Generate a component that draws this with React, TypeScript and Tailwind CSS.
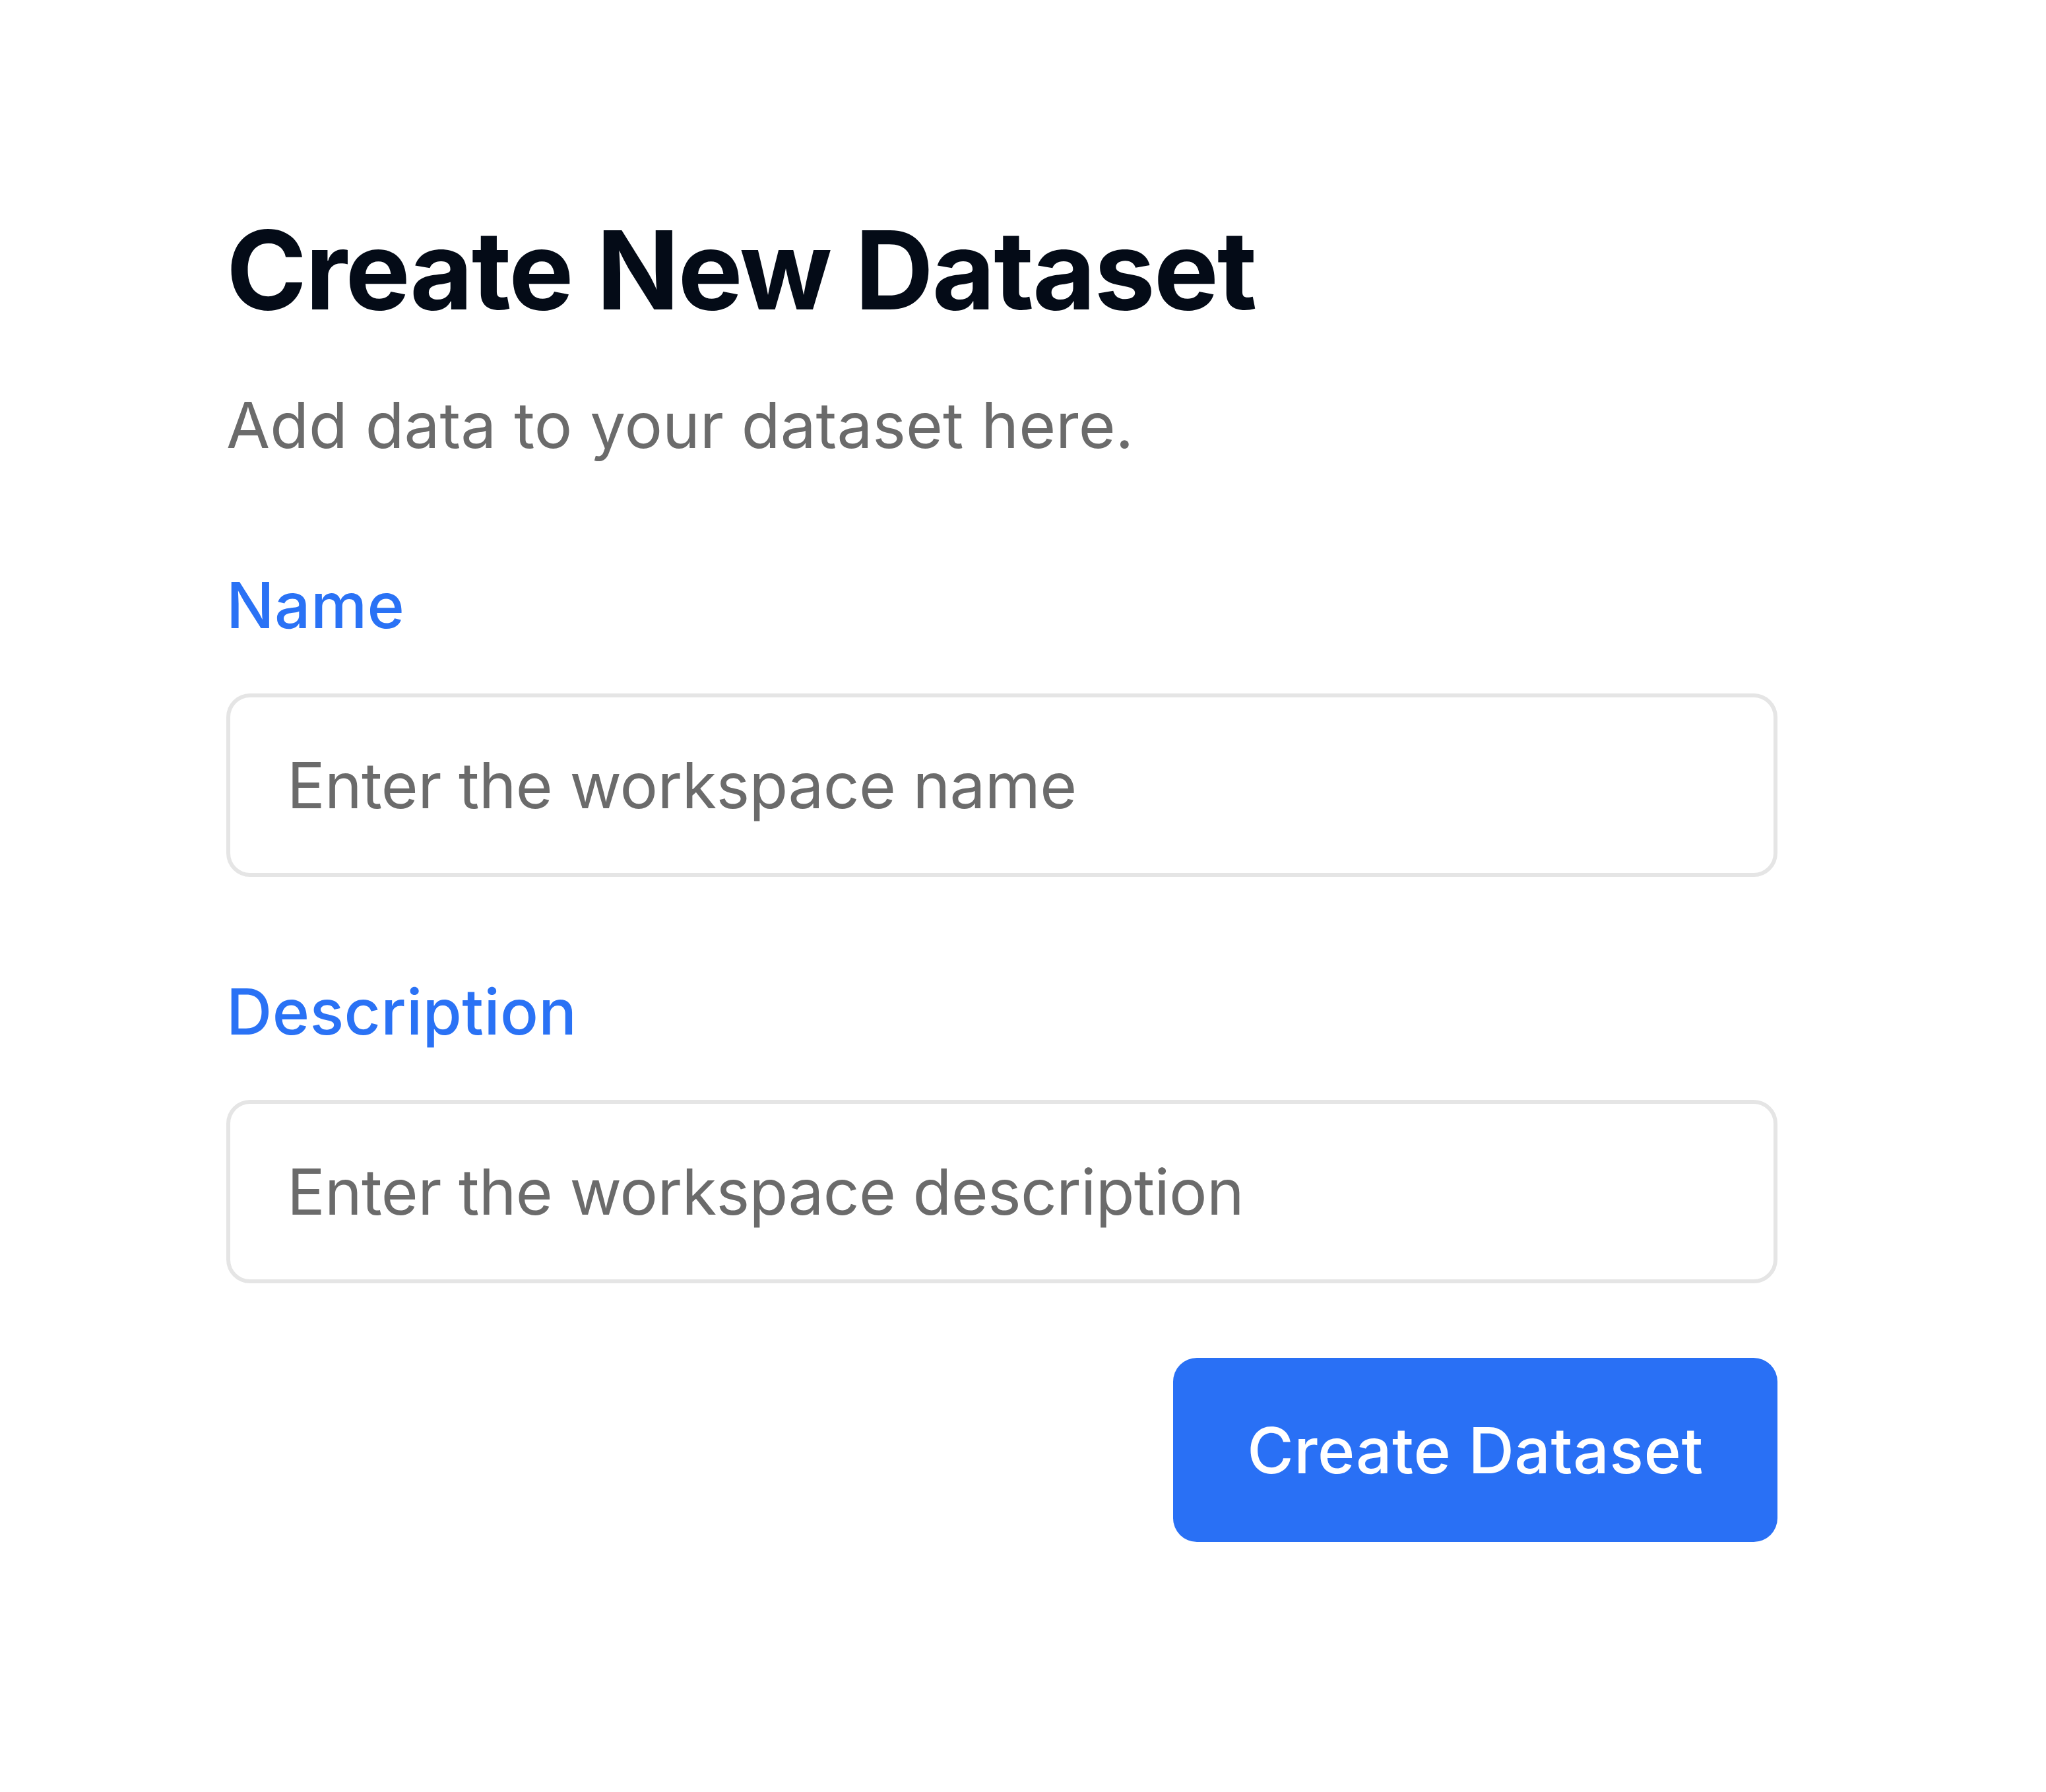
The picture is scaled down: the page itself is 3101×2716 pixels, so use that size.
import React from "react";

export default function App() {
  return (
    <div className="min-h-screen w-full bg-white" style={{ fontFamily: "Inter, 'Noto Sans', sans-serif" }}>
      <div className="ml-[343px] w-[2351px] pt-[327px] flex flex-col">
        <h1 className="text-[165px] leading-none font-bold tracking-[-0.014em] text-[#040b17]">
          Create New Dataset
        </h1>
        <p className="mt-[104px] text-[96px] leading-none text-[#6b6b6b]">
          Add data to your dataset here.
        </p>
        <label className="mt-[177px] text-[96px] leading-none font-medium tracking-[0.004em] text-[#2a72f5]">Name</label>
        <input
          className="mt-[86px] h-[278px] w-full rounded-[36px] border-[6px] border-[#e5e5e5] bg-white pl-[86px] text-[96px] leading-none tracking-[-0.007em] text-[#111] outline-none placeholder:text-[#6b6b6b]"
          placeholder="Enter the workspace name"
        />
        <label className="mt-[156px] text-[96px] leading-none font-medium tracking-[0.004em] text-[#2a72f5]">Description</label>
        <input
          className="mt-[86px] h-[278px] w-full rounded-[36px] border-[6px] border-[#e5e5e5] bg-white pl-[86px] text-[96px] leading-none tracking-[-0.007em] text-[#111] outline-none placeholder:text-[#6b6b6b]"
          placeholder="Enter the workspace description"
        />
        <div className="mt-[113px] flex justify-end">
          <button className="flex h-[279px] w-[916px] items-center justify-center rounded-[36px] bg-[#2970f5] text-[96px] leading-none font-medium tracking-[0.006em] text-white">
            Create Dataset
          </button>
        </div>
      </div>
    </div>
  );
}
